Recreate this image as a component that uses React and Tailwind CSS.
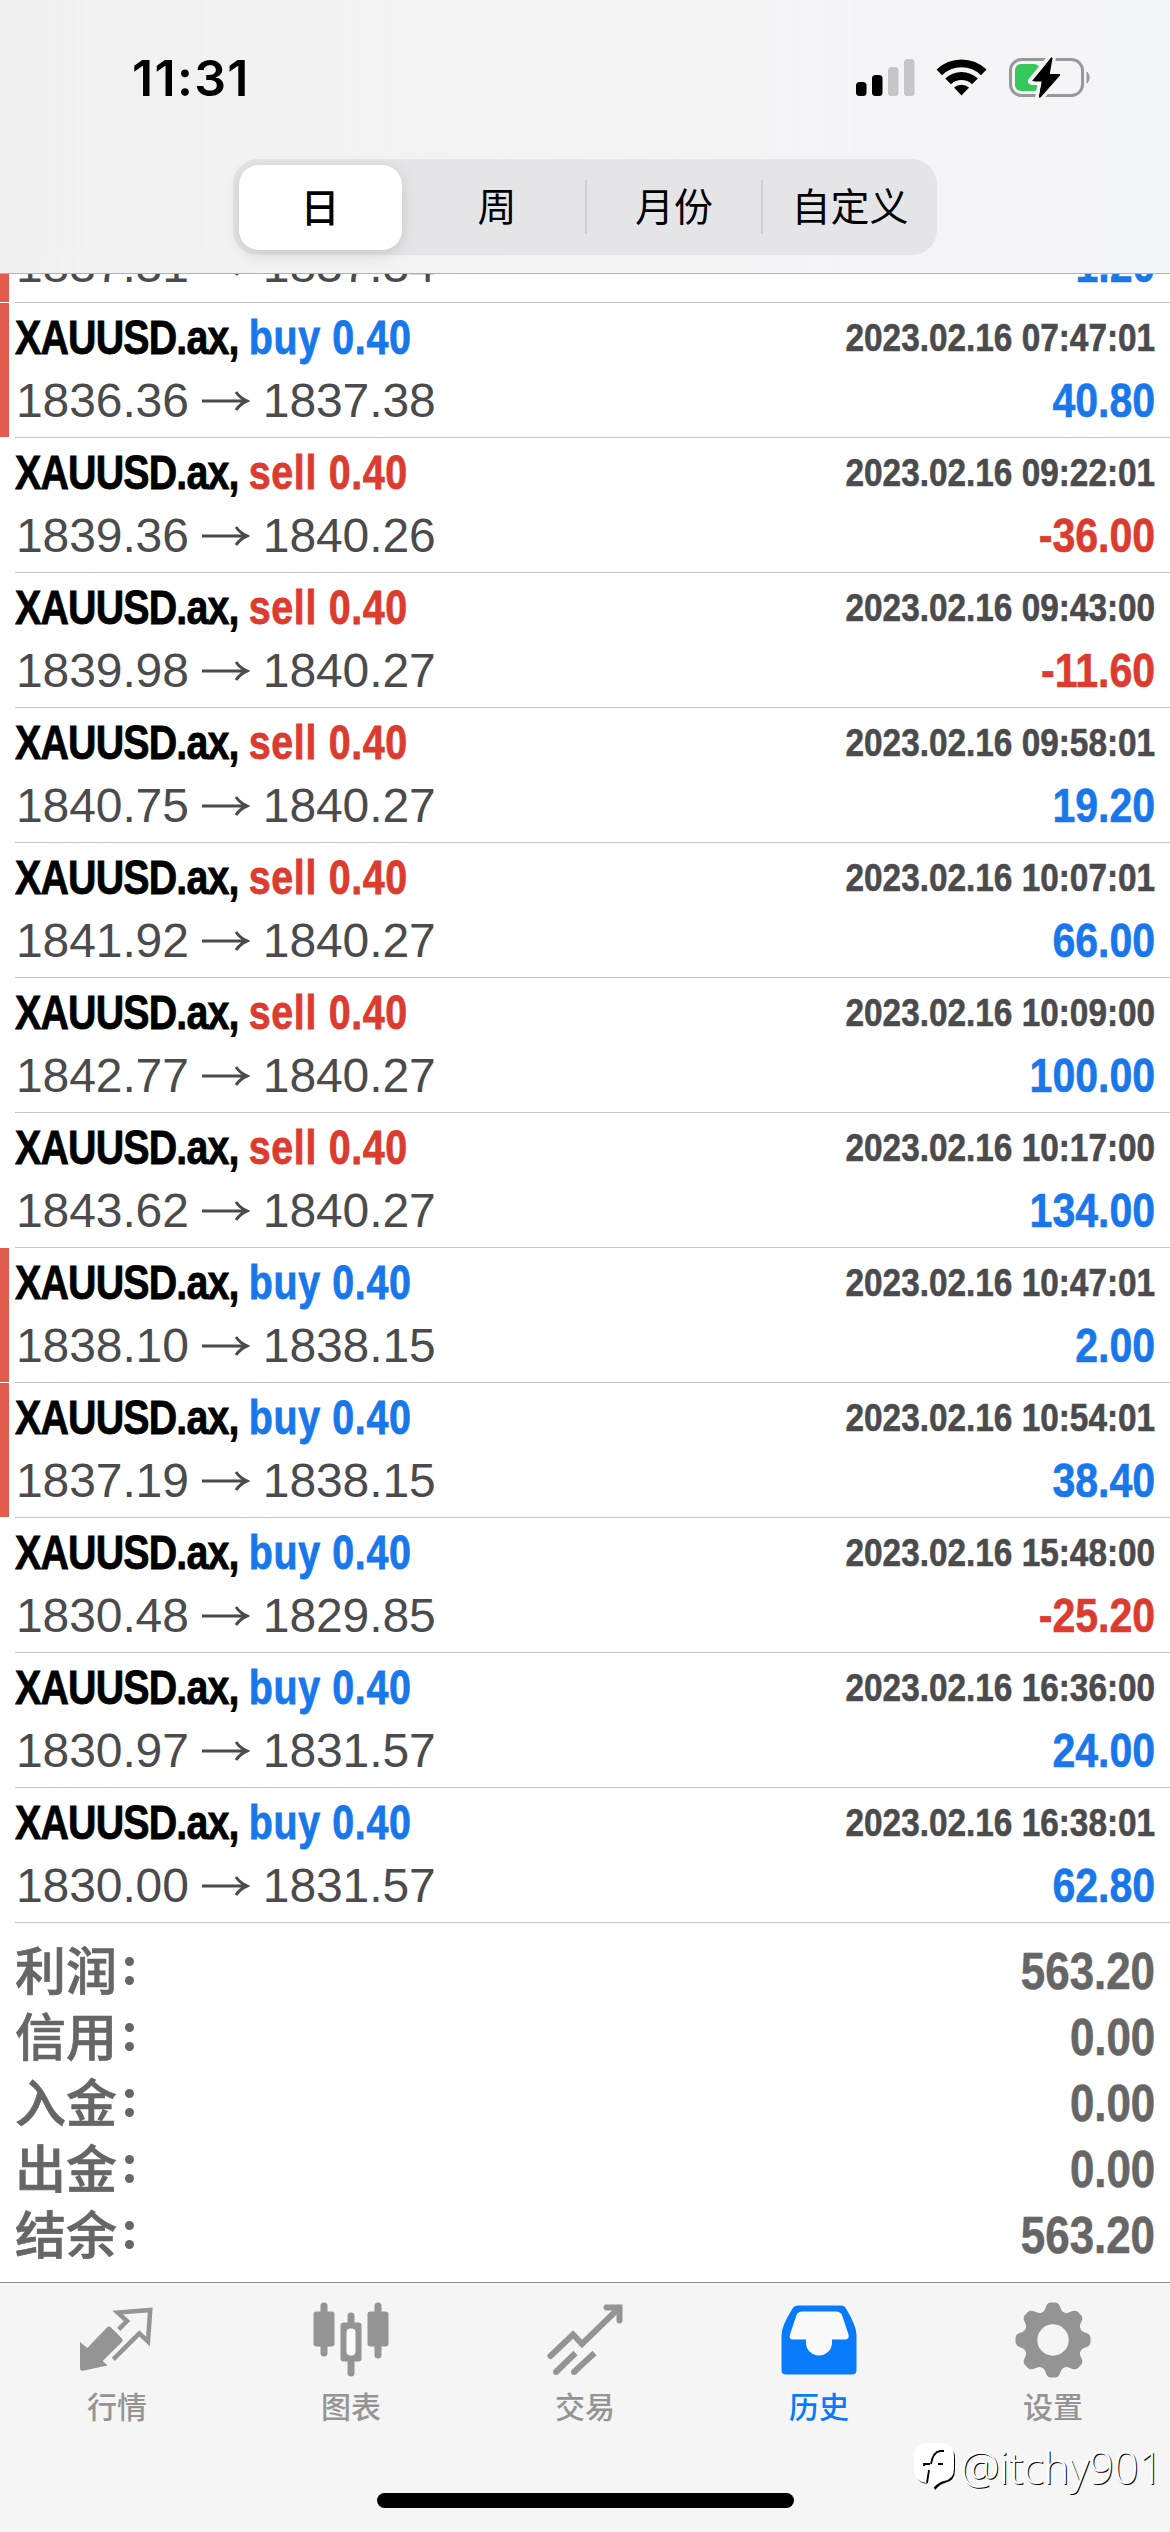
const deals = [
  { open: '1837.31', close: '1837.34', profit: '1.20', marked: true },
  { type: 'buy', time: '2023.02.16 07:47:01', open: '1836.36', close: '1837.38', profit: '40.80', marked: true },
  { type: 'sell', time: '2023.02.16 09:22:01', open: '1839.36', close: '1840.26', profit: '-36.00' },
  { type: 'sell', time: '2023.02.16 09:43:00', open: '1839.98', close: '1840.27', profit: '-11.60' },
  { type: 'sell', time: '2023.02.16 09:58:01', open: '1840.75', close: '1840.27', profit: '19.20' },
  { type: 'sell', time: '2023.02.16 10:07:01', open: '1841.92', close: '1840.27', profit: '66.00' },
  { type: 'sell', time: '2023.02.16 10:09:00', open: '1842.77', close: '1840.27', profit: '100.00' },
  { type: 'sell', time: '2023.02.16 10:17:00', open: '1843.62', close: '1840.27', profit: '134.00' },
  { type: 'buy', time: '2023.02.16 10:47:01', open: '1838.10', close: '1838.15', profit: '2.00', marked: true },
  { type: 'buy', time: '2023.02.16 10:54:01', open: '1837.19', close: '1838.15', profit: '38.40', marked: true },
  { type: 'buy', time: '2023.02.16 15:48:00', open: '1830.48', close: '1829.85', profit: '-25.20' },
  { type: 'buy', time: '2023.02.16 16:36:00', open: '1830.97', close: '1831.57', profit: '24.00' },
  { type: 'buy', time: '2023.02.16 16:38:01', open: '1830.00', close: '1831.57', profit: '62.80' },
];

const totals = [
  { label: '利润', value: '563.20' },
  { label: '信用', value: '0.00' },
  { label: '入金', value: '0.00' },
  { label: '出金', value: '0.00' },
  { label: '结余', value: '563.20' },
];

const periods = ['日', '周', '月份', '自定义'];

const StatusBar = () => (
  <div className="flex h-[159px] items-start justify-between pl-[132px] pr-[78px] pt-[53px]">
    <span className="font-['Inter',sans-serif] text-[50px] font-semibold leading-[50px] tracking-[1.3px] text-black">11:31</span>
    <div className="flex pt-[4px]">
      {/* signal */}
      <svg className="h-[48px] w-[60px]" viewBox="0 0 60 48">
        <rect x="0" y="25" width="10.5" height="14" rx="3.5" fill="#000" />
        <rect x="16" y="18" width="10.5" height="21" rx="3.5" fill="#000" />
        <rect x="32" y="10" width="10.5" height="29" rx="3.5" fill="#c6c6c8" />
        <rect x="48" y="2" width="10.5" height="37" rx="3.5" fill="#c6c6c8" />
      </svg>
      {/* wifi */}
      <svg className="ml-[20px] h-[48px] w-[52px]" viewBox="0 0 52 48">
        <path d="M0.5 12.5 A36 36 0 0 1 50.5 12.5 L45 18.2 A28 28 0 0 0 6 18.2 Z" fill="#000" />
        <path d="M9.2 21.5 A23.5 23.5 0 0 1 41.8 21.5 L36 27.2 A15.5 15.5 0 0 0 15 27.2 Z" fill="#000" />
        <path d="M18 30.5 A11.5 11.5 0 0 1 33 30.5 L25.5 38.5 Z" fill="#000" />
      </svg>
      {/* battery, charging */}
      <svg className="ml-[20px] h-[48px] w-[84px]" viewBox="0 0 84 48">
        <rect x="2.5" y="2.5" width="72" height="36" rx="11" fill="none" stroke="#98989b" strokeWidth="3" />
        <path d="M79 15 A8 8 0 0 1 79 26 Z" fill="#98989b" stroke="#98989b" />
        <rect x="7" y="7" width="25" height="27" rx="6" fill="#34c759" />
        <path d="M44 0 L24 24 H34 L31 41 L52 17 H41 Z" fill="#000" stroke="#f4f4f5" strokeWidth="8" strokeLinejoin="round" paintOrder="stroke" />
        <path d="M43.5 1.5 L26.5 23.5 H35 L32 39.5 L51 18 H40.5 Z" fill="#000" stroke="#000" strokeWidth="2" strokeLinejoin="round" />
      </svg>
    </div>
  </div>
);

const PeriodSwitch = () => (
  <div className="mx-auto flex h-[96px] w-[704px] rounded-[25px] bg-[#e5e5e7] font-['Noto_Sans_CJK_SC',sans-serif] text-[39px] leading-[90px] text-black">
    {periods.map((period, i) => (
      <div key={period} className="flex flex-1 items-center justify-center">
        {i === 0 ? (
          <div className="mr-[2px] h-[85px] w-[163px] rounded-[20px] bg-white text-center font-medium leading-[80px] shadow-[0_4px_16px_rgba(0,0,0,0.13)]">
            {period}
          </div>
        ) : (
          <>
            {i > 1 && <div className="h-[54px] w-[2px] bg-[#cfcfd2]" />}
            <div className="h-[96px] flex-1 text-center">{period}</div>
          </>
        )}
      </div>
    ))}
  </div>
);

const DealRow = ({ deal }) => {
  const typeColor = deal.type === 'buy' ? 'text-[#1877ea]' : 'text-[#dc3b2f]';
  const profitColor = deal.profit.startsWith('-') ? 'text-[#dc3b2f]' : 'text-[#1877ea]';
  return (
    <div className="flex h-[135px] shrink-0">
      <div className={`mr-[6px] h-[134px] w-[9px] ${deal.marked ? 'bg-[#e15c4d]' : ''}`} />
      <div className="flex flex-1 items-end justify-between border-b border-[#c4c4c7] pb-[5px] pr-[15px] font-['Liberation_Sans',sans-serif] text-[48px] leading-[63px]">
        <div>
          {deal.type && (
            <div className="w-max origin-left scale-x-[0.82] whitespace-pre font-bold tracking-[-1px] text-black [-webkit-text-stroke:0.8px_currentColor]">
              XAUUSD.ax, <span className={`tracking-[0.8px] ${typeColor}`}>{deal.type} 0.40</span>
            </div>
          )}
          <div className="flex items-center pl-px tracking-[-0.1px] text-[#4b4b4d]">
            {deal.open}
            <svg className="mx-[13px] h-[24px] w-[48px]" viewBox="0 0 48 24" fill="none" stroke="currentColor" strokeWidth="3">
              <path d="M0 12 H44.5 M34 3 Q38 9 45 12 Q38 15 34 21" />
            </svg>
            {deal.close}
          </div>
        </div>
        <div className="origin-right scale-x-[0.855] text-right font-bold [-webkit-text-stroke:0.6px_currentColor]">
          {deal.time && <div className="text-[39px] leading-[62px] text-[#4b4b4d]">{deal.time}</div>}
          <div className={profitColor}>{deal.profit}</div>
        </div>
      </div>
    </div>
  );
};

const Totals = () => (
  <div className="px-[15px] pt-[16px] text-[#666666]">
    {totals.map(({ label, value }) => (
      <div key={label} className="flex h-[66px] justify-between text-[51px]">
        <div className="flex h-[64px] font-['Noto_Sans_CJK_SC',sans-serif] font-medium leading-[58px] [-webkit-text-stroke:0.7px_currentColor]">
          {label}
          <span className="ml-[8px] flex flex-col justify-center gap-[10px]">
            <i className="size-[9px] rounded-full bg-[#666666]" />
            <i className="size-[9px] rounded-full bg-[#666666]" />
          </span>
        </div>
        <div className="origin-right scale-x-[0.86] font-['Liberation_Sans',sans-serif] font-bold leading-[66px] [-webkit-text-stroke:0.6px_currentColor]">{value}</div>
      </div>
    ))}
  </div>
);

const QuotesIcon = () => (
  <svg className="h-[76px] w-[76px]" viewBox="0 0 76 76">
    <path d="M1 40 L8.3 46 L28 25.5 Q30 23.5 32 25.5 L43 36.5 Q44.5 38 43 40 L23.7 59 L28.5 63.5 L5 68.5 Q0.5 69.5 1 65 Z" fill="currentColor" />
    <path d="M39.7 27.3 L48 19 L38.7 10.5 L71.2 8 L69 39.5 L60.3 31.3 L34.3 57.3" fill="none" stroke="currentColor" strokeWidth="4.5" />
  </svg>
);

const ChartIcon = () => (
  <svg className="h-[76px] w-[76px]" viewBox="0 0 76 76" fill="currentColor">
    <rect x="7.5" y="0.5" width="7" height="54" rx="3.5" />
    <rect x="0.5" y="9.5" width="21" height="35" rx="3" />
    <rect x="34.5" y="10.5" width="7" height="64" rx="3.5" />
    <rect x="27.5" y="20.5" width="21" height="39" rx="3" />
    <rect x="33.5" y="26.5" width="9" height="27" rx="4" fill="#fafafa" />
    <rect x="61.5" y="0.5" width="7" height="56" rx="3.5" />
    <rect x="54.5" y="9.5" width="21" height="35" rx="3" />
  </svg>
);

const TradeIcon = () => (
  <svg className="h-[76px] w-[76px]" viewBox="0 0 76 76" fill="none" stroke="currentColor" strokeWidth="6">
    <path d="M3.5 54 L26 32.5 L35 42 L72 6" strokeLinecap="round" />
    <path d="M59.5 5.5 H72.5 V18.5" strokeLinecap="round" />
    <path d="M9 70 L28.5 51 M27 70 L47.5 51" />
    <path d="M9 70 h0.01 M27 70 h0.01" strokeLinecap="round" />
  </svg>
);

const HistoryIcon = () => (
  <svg className="h-[76px] w-[76px]" viewBox="0 0 76 76">
    <path d="M17 3.5 H60 Q63.5 3.5 65 6.5 Q75.5 24 75.5 33 V68 Q75.5 72.5 71 72.5 H5 Q0.5 72.5 0.5 68 V33 Q0.5 24 11.5 6.5 Q13.5 3.5 17 3.5 Z" fill="currentColor" />
    <path d="M21 9.5 H55 Q59.5 9.5 61 13 L67.5 32.5 Q68.5 37.5 64 37.5 H51 V41 A13 12.5 0 0 1 25 41 V37.5 H12 Q7.5 37.5 9 32.5 L15.5 13 Q17 9.5 21 9.5 Z" fill="#f9f9f9" />
  </svg>
);

const SettingsIcon = () => (
  <svg className="h-[76px] w-[76px]" viewBox="0 0 76 76" fill="currentColor">
    <circle cx="38" cy="38" r="29.5" />
    {[0, 45, 90, 135, 180, 225, 270, 315].map((angle) => (
      <path key={angle} d="M26 11 Q29.5 10 31 4.5 Q32.5 0.5 36 0.5 H40 Q43.5 0.5 45 4.5 Q46.5 10 50 11 Z" transform={`rotate(${angle} 38 38)`} />
    ))}
    <circle cx="38" cy="38" r="15.7" fill="#f5f5f5" />
  </svg>
);

const tabs = [
  { label: '行情', Icon: QuotesIcon },
  { label: '图表', Icon: ChartIcon },
  { label: '交易', Icon: TradeIcon },
  { label: '历史', Icon: HistoryIcon, active: true },
  { label: '设置', Icon: SettingsIcon },
];

const Watermark = () => (
  <div className="absolute right-[7px] top-[158px] flex items-center">
    <svg className="h-[50px] w-[44px]" viewBox="0 0 44 50">
      <path d="M31 3 Q41 5 41 15 V27 Q41 38 31 40 Q26 41 21 47 L19 42 L14 41 Q5 40 3 35 Z" fill="#000" transform="translate(1 1)" />
      <path d="M13 1 H29 Q41 1 41 15 V27 Q41 37 31 39 Q26 40 20 46 L16 43 L13 41 Q1 39 1 28 V15 Q1 1 13 1 Z" fill="#fff" />
      <path d="M31 9 H27 Q20 10 18 22 M11 24 V22 H17 M25 22 H30 M16 28 L14 41" fill="none" stroke="#000" strokeWidth="1.8" />
    </svg>
    <span className="ml-[4px] font-['Open_Sans',sans-serif] text-[44px] font-light leading-[52px] tracking-[-0.4px] text-white [text-shadow:1px_1px_0_#000]">@itchy901</span>
  </div>
);

const TabBar = () => (
  <nav className="relative h-[250px] border-t border-[#8f8f91] bg-[#f5f5f5]">
    <div className="flex pt-[19px]">
      {tabs.map(({ label, Icon, active }) => (
        <div key={label} className={`flex flex-1 flex-col items-center ${active ? 'text-[#087bfb]' : 'text-[#949494]'}`}>
          <Icon />
          <span className="mb-[2px] mt-[5px] font-['Noto_Sans_CJK_SC',sans-serif] text-[30px] font-medium leading-[45px]">{label}</span>
        </div>
      ))}
    </div>
    <div className="mx-auto mt-[63px] h-[15px] w-[417px] rounded-full bg-black" />
    <Watermark />
  </nav>
);

const App = () => (
  <div className="flex h-[2532px] w-[1170px] flex-col overflow-hidden bg-white">
    <header className="h-[274px] shrink-0 border-b border-[#b2b2b4] bg-gradient-to-r from-[#f1f0f1] via-[#f4f4f5] to-[#f4f5f8]">
      <StatusBar />
      <PeriodSwitch />
    </header>
    {/* scrolled to the end, so the oldest row is cut by the header */}
    <section className="flex h-[1649px] shrink-0 flex-col justify-end overflow-hidden">
      {deals.map((deal) => (
        <DealRow key={deal.open} deal={deal} />
      ))}
    </section>
    <section className="h-[359px] shrink-0">
      <Totals />
    </section>
    <TabBar />
  </div>
);

export default App;
